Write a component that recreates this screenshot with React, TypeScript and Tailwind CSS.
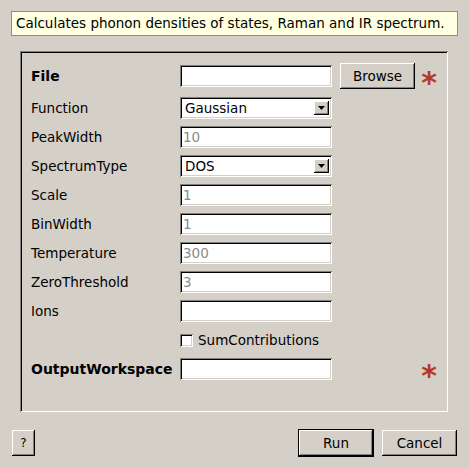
import React from "react";

const sunken =
  "shadow-[inset_1px_1px_0_#808080,inset_-1px_-1px_0_#ffffff,inset_2px_2px_0_#000000,inset_-2px_-2px_0_#d4d0c8]";
const raised =
  "shadow-[inset_-1px_-1px_0_#000000,inset_1px_1px_0_#ffffff,inset_-2px_-2px_0_#808080]";

function Label({ text, bold }: { text: string; bold?: boolean }) {
  return (
    <div className={`w-[149px] shrink-0 text-black ${bold ? "font-bold text-[14px]" : "text-[13.5px]"}`}>{text}</div>
  );
}

function TextBox({ value, grey }: { value?: string; grey?: boolean }) {
  return (
    <div
      className={`w-[152px] h-[22px] bg-white ${sunken} flex items-center pl-[3px] text-[13.5px] ${
        grey ? "text-[#8a8a8a]" : "text-black"
      }`}
    >
      {value}
    </div>
  );
}

function Select({ value }: { value: string }) {
  return (
    <div className={`w-[152px] h-[22px] bg-white ${sunken} flex items-stretch p-[2px] pr-[2px]`}>
      <div className="flex-1 flex items-center pl-[3px] text-[13.5px] text-black">{value}</div>
      <div className={`w-[15px] my-[2px] mr-[1px] bg-[#d4d0c8] ${raised} flex items-center justify-center`}>
        <svg width="7" height="4" viewBox="0 0 7 4">
          <polygon points="0,0 7,0 3.5,4" fill="#000" />
        </svg>
      </div>
    </div>
  );
}

function Star() {
  return (
    <div className="w-[16px] h-[22px] flex items-center justify-center text-[#b3392b] font-bold text-[30px] leading-none pt-[14px]">
      *
    </div>
  );
}

function Row({ children }: { children: React.ReactNode }) {
  return <div className="flex items-center h-[22px]">{children}</div>;
}

export default function App() {
  return (
    <div
      className="w-[469px] h-[468px] bg-[#d4d0c8] relative overflow-hidden"
      style={{ fontFamily: '"DejaVu Sans", sans-serif' }}
    >
      <div className="pt-[11px] pl-[11px]">
        <div className="w-[447px] h-[25px] bg-[#ffffe1] border border-[#8c8c8c] flex items-center pl-[4px] text-[13.5px] text-black">
          Calculates phonon densities of states, Raman and IR spectrum.
        </div>
      </div>
      <div className="pl-[20px] pt-[15px]">
        <div className={`w-[428px] h-[361px] ${sunken} pl-[11px] pt-[12px] flex flex-col`}>
          <div className="flex items-center h-[26px]">
            <Label text="File" bold />
            <TextBox />
            <div
              className={`ml-[8px] w-[75px] h-[26px] bg-[#d4d0c8] ${raised} flex items-center justify-center text-[13.5px] text-black`}
            >
              Browse
            </div>
            <div className="ml-[6px]">
              <Star />
            </div>
          </div>
          <div className="flex flex-col gap-[7px] mt-[8px]">
            <Row>
              <Label text="Function" />
              <Select value="Gaussian" />
            </Row>
            <Row>
              <Label text="PeakWidth" />
              <TextBox value="10" grey />
            </Row>
            <Row>
              <Label text="SpectrumType" />
              <Select value="DOS" />
            </Row>
            <Row>
              <Label text="Scale" />
              <TextBox value="1" grey />
            </Row>
            <Row>
              <Label text="BinWidth" />
              <TextBox value="1" grey />
            </Row>
            <Row>
              <Label text="Temperature" />
              <TextBox value="300" grey />
            </Row>
            <Row>
              <Label text="ZeroThreshold" />
              <TextBox value="3" grey />
            </Row>
            <Row>
              <Label text="Ions" />
              <TextBox />
            </Row>
            <Row>
              <div className="w-[149px] shrink-0" />
              <div className={`w-[13px] h-[13px] bg-white ${sunken}`} />
              <div className="ml-[5px] text-[13.5px] text-black">SumContributions</div>
            </Row>
            <Row>
              <Label text="OutputWorkspace" bold />
              <TextBox />
              <div className="ml-[89px]">
                <Star />
              </div>
            </Row>
          </div>
        </div>
      </div>
      <div className="flex items-center pl-[12px] pr-[12px] mt-[17px]">
        <div
          className={`w-[23px] h-[26px] bg-[#d4d0c8] ${raised} flex items-center justify-center text-[12px] text-black`}
        >
          ?
        </div>
        <div className="flex-1" />
        <div className="w-[76px] h-[28px] border border-black flex">
          <div className={`flex-1 bg-[#d4d0c8] ${raised} flex items-center justify-center text-[13.5px] text-black`}>
            Run
          </div>
        </div>
        <div
          className={`ml-[8px] w-[75px] h-[26px] bg-[#d4d0c8] ${raised} flex items-center justify-center text-[13.5px] text-black`}
        >
          Cancel
        </div>
      </div>
    </div>
  );
}
